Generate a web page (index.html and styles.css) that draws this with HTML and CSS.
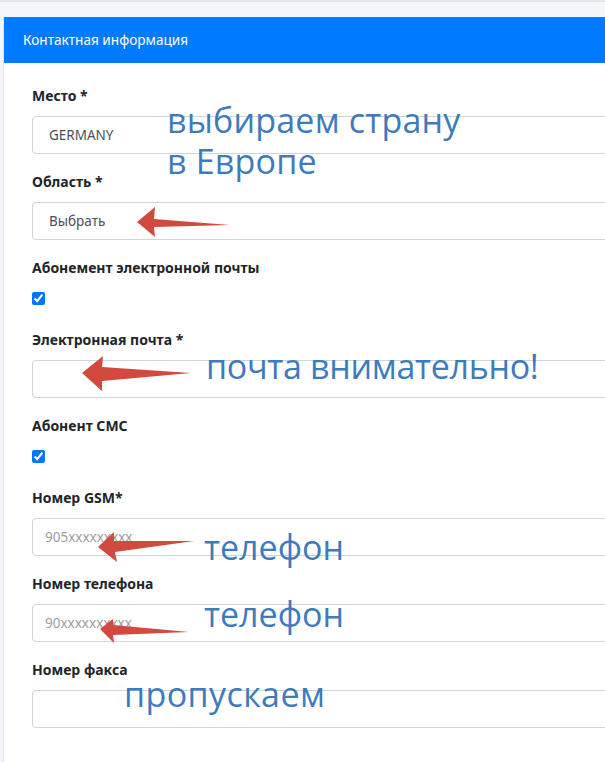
FILE: index.html
```html
<!DOCTYPE html>
<html lang="ru">
<head>
<meta charset="utf-8">
<title>Контактная информация</title>
<link rel="stylesheet" href="styles.css">
</head>
<body>
<div class="page">
  <div class="card">
    <div class="card-header">Контактная информация</div>
    <div class="card-body">
      <div class="form-group">
        <label class="label">Место *</label>
        <div class="control select">GERMANY</div>
      </div>
      <div class="form-group">
        <label class="label">Область *</label>
        <div class="control select">Выбрать</div>
      </div>
      <div class="form-group check-group">
        <label class="label">Абонемент электронной почты</label>
        <div class="check-line"><input type="checkbox" checked></div>
      </div>
      <div class="form-group">
        <label class="label">Электронная почта *</label>
        <div class="control"></div>
      </div>
      <div class="form-group check-group">
        <label class="label">Абонент СМС</label>
        <div class="check-line"><input type="checkbox" checked></div>
      </div>
      <div class="form-group">
        <label class="label">Номер GSM*</label>
        <div class="control placeholder">905xxxxxxxxx</div>
      </div>
      <div class="form-group">
        <label class="label">Номер телефона</label>
        <div class="control placeholder">90xxxxxxxxxx</div>
      </div>
      <div class="form-group">
        <label class="label">Номер факса</label>
        <div class="control"></div>
      </div>
    </div>

    <div class="note note-country">выбираем страну<br>в Европе</div>
    <div class="note note-mail">почта внимательно!</div>
    <div class="note note-gsm">телефон</div>
    <div class="note note-phone">телефон</div>
    <div class="note note-fax">пропускаем</div>

    <svg class="arrows" width="605" height="762" viewBox="0 0 605 762">
      <polygon points="136,222 154,207 153,219 229,225 153,227 154,237" />
      <polygon points="81,373 102,356 101,367 190,373 101,381 101,391" />
      <polygon points="97,547 113,532 113,541 193,541 114,552 116,562" />
      <polygon points="99,629 112,619 112,625 188,632 112,635 113,643" />
    </svg>
  </div>
</div>
</body>
</html>
```

FILE: styles.css
```css
html, body {
  margin: 0;
  padding: 0;
  overflow: hidden;
  background: #f4f6f9;
}

.page {
  padding: 17px 0 0 3px;
  border-top: 2px solid #e3e5e8;
  box-sizing: border-box;
  height: 762px;
}

.card {
  position: relative;
  width: 660px;
  height: 800px;
  background: #fff;
  border-left: 1px solid #e1e3e6;
  margin-top: -2px;
}

.card-header {
  background: #007bff;
  color: #fff;
  height: 46px;
  box-sizing: border-box;
  padding: 12px 0 0 19px;
  font-family: "Noto Sans", sans-serif;
  font-size: 13.6px;
  line-height: 22px;
}

.card-body {
  padding: 23px 0 0 28px;
  font-family: "Noto Sans", sans-serif;
}

.form-group {
  display: flex;
  flex-direction: column;
  margin-bottom: 18px;
}

.check-group {
  margin-bottom: 22px;
}

.label {
  font-size: 14px;
  font-weight: 700;
  color: #212529;
  line-height: 20px;
  margin-bottom: 10px;
}

.control {
  height: 38px;
  box-sizing: border-box;
  border: 1px solid #ced4da;
  border-radius: 4px;
  padding: 0 12px;
  font-size: 13.5px;
  line-height: 36px;
  color: #495057;
}

.select {
  padding-left: 16px;
}

.placeholder {
  color: #9a9ea3;
}

.check-line {
  height: 20px;
  display: flex;
  align-items: center;
}

.check-line input {
  margin: 0;
  width: 13px;
  height: 13px;
  accent-color: #0075ff;
}

.note {
  position: absolute;
  font-family: "Open Sans", sans-serif;
  font-size: 34px;
  line-height: 41px;
  color: #3e7bbd;
  white-space: nowrap;
}

.note-country { left: 163px; top: 83px; letter-spacing: 0.2px; }
.note-mail { left: 202px; top: 329px; letter-spacing: -0.3px; }
.note-gsm { left: 200px; top: 510px; }
.note-phone { left: 200px; top: 577px; }
.note-fax { left: 120px; top: 657px; letter-spacing: 0.4px; }

.arrows {
  position: absolute;
  left: -3px;
  top: -17px;
  pointer-events: none;
}

.arrows polygon {
  fill: #d1493f;
}
```
